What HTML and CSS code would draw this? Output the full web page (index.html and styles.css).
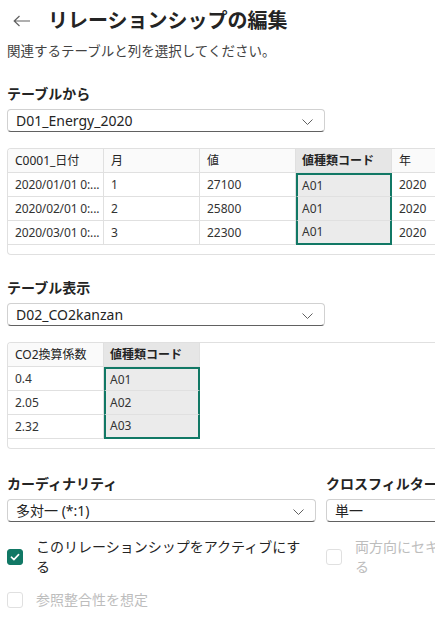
FILE: index.html
```html
<!DOCTYPE html>
<html lang="ja">

<head>
    <meta charset="UTF-8">
    <meta name="viewport" content="width=device-width, initial-scale=1.0">
    <title>リレーションシップの編集</title>
    <link rel="stylesheet" href="styles.css">
</head>

<body>
    <div class="page">
        <div class="head">
            <span class="back">
                <svg width="18" height="12" viewBox="0 0 18 12">
                    <path d="M6.5 1 L1.2 6 L6.5 11 M1.2 6 H17" fill="none" stroke="#616161" stroke-width="1.2" />
                </svg>
            </span>
            <h1 class="title">リレーションシップの編集</h1>
        </div>
        <p class="intro">関連するテーブルと列を選択してください。</p>

        <!-- テーブルから -->
        <div class="label first">テーブルから</div>
        <div class="select wide">
            <span>D01_Energy_2020</span>
            <svg class="chev" width="11" height="6" viewBox="0 0 11 6">
                <path d="M0.5 0.5 L5.5 5.5 L10.5 0.5" fill="none" stroke="#616161" stroke-width="1" />
            </svg>
        </div>
        <div class="table-box">
            <div class="grid five">
                <div class="cell th">C0001_日付</div>
                <div class="cell th">月</div>
                <div class="cell th">値</div>
                <div class="cell th sel-head">値種類コード</div>
                <div class="cell th">年</div>

                <div class="cell trunc">2020/01/01 0:...</div>
                <div class="cell">1</div>
                <div class="cell">27100</div>
                <div class="cell sel sel-top">A01</div>
                <div class="cell">2020</div>

                <div class="cell trunc">2020/02/01 0:...</div>
                <div class="cell">2</div>
                <div class="cell">25800</div>
                <div class="cell sel">A01</div>
                <div class="cell">2020</div>

                <div class="cell trunc">2020/03/01 0:...</div>
                <div class="cell">3</div>
                <div class="cell">22300</div>
                <div class="cell sel sel-bottom">A01</div>
                <div class="cell">2020</div>
            </div>
        </div>

        <!-- テーブル表示 -->
        <div class="label after-table">テーブル表示</div>
        <div class="select wide">
            <span>D02_CO2kanzan</span>
            <svg class="chev" width="11" height="6" viewBox="0 0 11 6">
                <path d="M0.5 0.5 L5.5 5.5 L10.5 0.5" fill="none" stroke="#616161" stroke-width="1" />
            </svg>
        </div>
        <div class="table-box">
            <div class="grid two">
                <div class="cell th">CO2換算係数</div>
                <div class="cell th sel-head">値種類コード</div>

                <div class="cell">0.4</div>
                <div class="cell sel sel-top">A01</div>

                <div class="cell">2.05</div>
                <div class="cell sel">A02</div>

                <div class="cell">2.32</div>
                <div class="cell sel sel-bottom">A03</div>
            </div>
        </div>

        <!-- カーディナリティ / クロスフィルター -->
        <div class="form-row">
            <div class="col">
                <div class="label">カーディナリティ</div>
                <div class="select">
                    <span>多対一 (*:1)</span>
                    <svg class="chev" width="11" height="6" viewBox="0 0 11 6">
                        <path d="M0.5 0.5 L5.5 5.5 L10.5 0.5" fill="none" stroke="#616161" stroke-width="1" />
                    </svg>
                </div>
            </div>
            <div class="col">
                <div class="label">クロスフィルターの方向</div>
                <div class="select">
                    <span>単一</span>
                    <svg class="chev" width="11" height="6" viewBox="0 0 11 6">
                        <path d="M0.5 0.5 L5.5 5.5 L10.5 0.5" fill="none" stroke="#616161" stroke-width="1" />
                    </svg>
                </div>
            </div>
        </div>

        <div class="form-row checks">
            <div class="col">
                <label class="check">
                    <span class="box on">
                        <svg width="14" height="14" viewBox="0 0 14 14">
                            <path d="M3.4 7.2 L5.9 9.6 L10.6 4.6" fill="none" stroke="#fff" stroke-width="1.6" stroke-linecap="round" stroke-linejoin="round" />
                        </svg>
                    </span>
                    <span class="check-text">このリレーションシップをアクティブにする</span>
                </label>
            </div>
            <div class="col">
                <label class="check off">
                    <span class="box"></span>
                    <span class="check-text">両方向にセキュリティフィルターを適用する</span>
                </label>
            </div>
        </div>

        <div class="form-row last">
            <div class="col">
                <label class="check off">
                    <span class="box"></span>
                    <span class="check-text">参照整合性を想定</span>
                </label>
            </div>
        </div>
    </div>
</body>

</html>
```

FILE: styles.css
```css
body {
    margin: 0;
    overflow: hidden;
    background: #fff;
    color: #242424;
    font-family: "Noto Sans", "Noto Sans CJK JP", sans-serif;
}

.page {
    width: 900px;
    padding: 0 7px;
}

.head {
    display: flex;
    align-items: center;
    height: 42px;
}

.back {
    display: flex;
    margin-left: 6px;
    margin-right: 17px;
}

.title {
    margin: 0;
    font-size: 20px;
    line-height: 28px;
    font-weight: 700;
}

.intro {
    margin: 0;
    font-size: 13.5px;
    line-height: 18px;
    color: #424242;
}

.label {
    margin-top: 25px;
    font-size: 14px;
    line-height: 20px;
    font-weight: 700;
    white-space: nowrap;
}

.label.first {
    margin-top: 24px;
}

.label.after-table {
    margin-top: 23px;
}

.select {
    box-sizing: border-box;
    height: 23px;
    margin-top: 5px;
    padding: 0 11px 0 8px;
    display: flex;
    align-items: center;
    justify-content: space-between;
    border: 1px solid #d1d1d1;
    border-bottom-color: #616161;
    border-radius: 4px;
    font-size: 14px;
    line-height: 20px;
    white-space: nowrap;
}

.select.wide {
    width: 318px;
}

.chev {
    flex: none;
    margin-top: 3px;
}

/* データプレビュー */
.table-box {
    width: 460px;
    margin-top: 16px;
    padding-bottom: 9px;
    border: 1px solid #e0e0e0;
    border-right: none;
    border-radius: 4px 0 0 4px;
    overflow: hidden;
}

.grid {
    display: grid;
    grid-template-columns: repeat(5, 96px);
}

.grid.two {
    grid-template-columns: repeat(2, 96px);
}

.cell {
    box-sizing: border-box;
    height: 24px;
    padding: 0 7px;
    border-right: 1px solid #e0e0e0;
    border-bottom: 1px solid #e0e0e0;
    font-size: 12px;
    line-height: 23px;
    color: #333;
    white-space: nowrap;
}

.cell.trunc {
    padding-right: 0;
    letter-spacing: -0.15px;
}

.cell.th {
    background: #fafafa;
    color: #242424;
}

.cell.sel-head {
    background: #e6e6e6;
    font-weight: 700;
    padding-left: 6px;
}

.cell.sel {
    background: #ebebeb;
    padding-left: 4px;
    border-left: 2px solid #117865;
    border-right: 2px solid #117865;
}

.cell.sel-top {
    border-top: 2px solid #117865;
    line-height: 22px;
}

.cell.sel-bottom {
    border-bottom: 2px solid #117865;
    line-height: 21px;
}

/* 設定 */
.form-row {
    display: flex;
    gap: 10px;
}

.col {
    width: 309px;
    flex: none;
}

.form-row.checks {
    margin-top: 15px;
}

.form-row.last {
    margin-top: 13px;
}

.check {
    display: flex;
    align-items: center;
    gap: 13px;
    font-size: 14px;
    line-height: 20px;
    color: #242424;
}

.check.off {
    color: #bdbdbd;
}

.check-text {
    padding-right: 8px;
}

.box {
    flex: none;
    box-sizing: border-box;
    width: 16px;
    height: 16px;
    display: flex;
    align-items: center;
    justify-content: center;
    border: 1px solid #e0e0e0;
    border-radius: 3px;
}

.box.on {
    background: #117865;
    border-color: #117865;
}
```
